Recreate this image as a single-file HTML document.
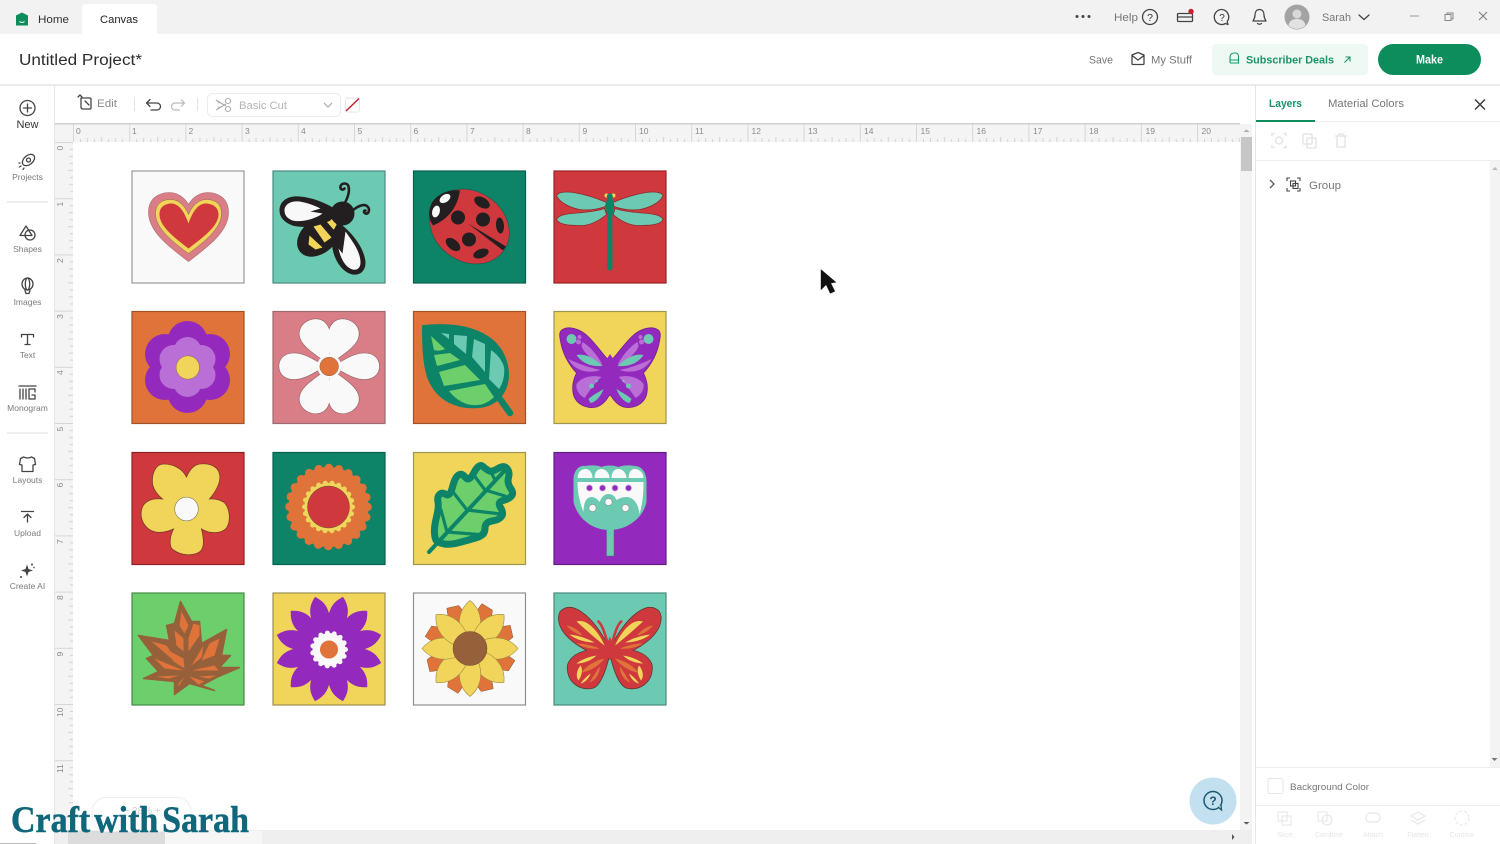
<!DOCTYPE html>
<html><head><meta charset="utf-8"><title>Canvas</title>
<style>
html,body{margin:0;padding:0;background:#fff;width:1500px;height:844px;overflow:hidden}
svg{display:block}
text{font-family:"Liberation Sans",sans-serif}
.ic{fill:none;stroke:#444;stroke-width:1.3;stroke-linecap:round;stroke-linejoin:round}
.lb{font-size:8.5px;fill:#7a7a7a;text-anchor:middle}
.rn{font-size:8.5px;fill:#8a8a8a}
.fa{fill:none;stroke:#e8e8e8;stroke-width:1.2}
.fl{font-size:7px;fill:#e6e6e6;text-anchor:middle}
</style></head><body>
<svg width="1500" height="844" viewBox="0 0 1500 844" xmlns="http://www.w3.org/2000/svg">
<defs>
<pattern id="hr" x="73" y="124" width="56.2" height="18" patternUnits="userSpaceOnUse">
<path d="M0.5 0V18" stroke="#d6d6d6" stroke-width="1"/>
<path d="M7.5 15V18M14.5 14V18M21.500 15V18M28.5 13V18M35.500 15V18M42.500 14V18M49.500 15V18" stroke="#d2d2d2" stroke-width="1"/>
</pattern>
<pattern id="vr" x="55" y="142" width="18" height="56.2" patternUnits="userSpaceOnUse">
<path d="M0 0.5H18" stroke="#d6d6d6" stroke-width="1"/>
<path d="M15 7.5H18M14 14.5H18M15 21.500H18M13 28.5H18M15 35.500H18M14 42.500H18M15 49.500H18" stroke="#d2d2d2" stroke-width="1"/>
</pattern>
<path id="dais" d="M0,-3 C-6,-14 -15,-26 -15,-36 C-15,-45 -8,-50 0,-50 C8,-50 15,-45 15,-36 C15,-26 6,-14 0,-3Z"/>
<path id="daiss" d="M0,-3 C-5,-14 -13,-24 -13,-35 C-13,-45 -7,-50 0,-50 C7,-50 13,-45 13,-35 C13,-24 5,-14 0,-3Z"/>
<path id="star" d="M0,-54 C8,-47 10,-40 9,-30 L-9,-30 C-10,-40 -8,-47 0,-54Z"/>
<path id="sun" d="M0,-48 C10,-40 13,-28 9,-15 L-9,-15 C-13,-28 -10,-40 0,-48Z"/>
<path id="sunb" d="M-6,-46 L6,-44 C10,-32 8,-24 6,-15 L-6,-15 C-10,-26 -9,-36 -6,-46Z"/>
<g id="bfy">
<path d="M56 50C50 45 44 34 33 24C26 18 16 15 10 18C5 20 6 25 7 30C9 42 14 52 23 62C20 68 18 76 20 84C23 94 34 98 43 96C50 94 54 88 57 82Z" fill="#9429bd" stroke="#6c2290" stroke-width=".8"/>
<circle cx="18" cy="28" r="5" fill="#6ccab2"/><circle cx="26" cy="26" r="2" fill="#b96fd6"/><circle cx="25" cy="31" r="2.500" fill="#b96fd6"/>
<path d="M29 31C36 35 44 44 49 54C40 50 30 42 28 35Z" fill="#b96fd6"/>
<path d="M23 44C32 42 42 48 49 55C39 56 29 53 23 44Z" fill="#6ccab2"/>
<path d="M15 48C25 53 37 57 47 59C35 63 21 60 15 48Z" fill="#b96fd6"/>
<path d="M23 73C29 65 40 64 48 66C41 72 36 80 31 87C26 84 22 79 23 73Z" fill="#b96fd6"/>
<circle cx="38" cy="75" r="2.500" fill="#6ccab2"/><circle cx="43" cy="70" r="1.200" fill="#6ccab2"/>
<path d="M35 88C39 84 44 82 50 78C48 84 43 91 37 92Z" fill="#6ccab2"/>
</g>
<g id="bfr">
<path d="M56 55C48 40 36 22 22 16C14 13 6 16 5 24C4 36 14 48 33 58C22 60 12 68 14 78C15 90 26 98 38 96C46 95 52 80 56 63Z" fill="#cf393d" stroke="#5d3a34" stroke-width=".8"/>
<g fill="#f1d45a"><path d="M23 29C30 27 36 31 42 38C46 43 49 48 51 53C43 47 32 37 23 29Z"/><path d="M16 42C25 43 34 46 41 50C32 50 22 47 16 42Z"/><path d="M23 71C28 67 36 64 43 63C38 68 30 71 23 71Z"/><path d="M27 73C30 77 28 84 25 88C22 84 23 78 27 73Z"/><path d="M27 91C30 87 33 84 37 81C36 85 32 90 27 91Z"/></g>
<g fill="#e0733a"><path d="M13 33C20 34 25 38 29 43C24 42 17 38 13 33Z"/><path d="M23 51C31 51 39 53 46 56C38 57 30 55 23 51Z"/><path d="M28 80C33 73 42 68 51 66C46 73 36 79 28 80Z"/><path d="M36 90C39 85 42 80 46 74C47 80 42 88 36 90Z"/></g>
</g>
<g id="dfw">
<path d="M3 25C5 21 12 21 20 22C32 24 44 28 53 32L52 36C44 39 34 40 26 39C16 37 6 32 3 25Z" fill="#6ccab2" stroke="#8a2b2f" stroke-width=".8"/>
<path d="M3 49C5 45 10 44 18 43C30 42 42 41 51 38L53 44C46 50 38 54 30 55C18 55 6 55 3 49Z" fill="#6ccab2" stroke="#8a2b2f" stroke-width=".8"/>
</g>
</defs>

<!-- top bar -->
<rect x="0" y="0" width="1500" height="34" fill="#f2f2f2"/>
<path d="M82 34V7a3 3 0 0 1 3-3h69a3 3 0 0 1 3 3v27Z" fill="#fff"/>
<path d="M16 15.5 22 12.5 28 15.5V25.5H16Z" fill="#0d8d5b"/><path d="M19.5 21.5Q22 23.5 24.5 21.5" stroke="#fff" stroke-width="1" fill="none"/>
<text x="38" y="23" font-size="11" fill="#333" textLength="31" lengthAdjust="spacingAndGlyphs">Home</text>
<text x="100" y="23" font-size="11" fill="#222" textLength="38" lengthAdjust="spacingAndGlyphs">Canvas</text>
<g fill="#444"><circle cx="1077" cy="16.5" r="1.5"/><circle cx="1083" cy="16.5" r="1.5"/><circle cx="1089" cy="16.5" r="1.5"/></g>
<text x="1114" y="21" font-size="11" fill="#777" textLength="24" lengthAdjust="spacingAndGlyphs">Help</text>
<circle cx="1150" cy="17" r="7.5" class="ic"/><text x="1150" y="21" font-size="10.5" fill="#333" text-anchor="middle">?</text>
<path d="M1178.500 13.500h13a1 1 0 0 1 1 1v6a1 1 0 0 1-1 1h-13a1 1 0 0 1-1-1v-6a1 1 0 0 1 1-1ZM1177.500 17h15" class="ic"/><circle cx="1191" cy="11.500" r="2.700" fill="#c8202a"/>
<path d="M1222 9.500a7.500 7.500 0 1 0 3.500 14l2.500 1-.8-3a7.500 7.500 0 0 0-5.200-12Z" class="ic"/><text x="1222" y="21" font-size="10" fill="#333" text-anchor="middle">?</text>
<path d="M1259.500 9.500c-3 0-4.500 2.500-4.500 5.500 0 3-1.500 5-2 6h13c-.5-1-2-3-2-6 0-3-1.500-5.500-4.500-5.500ZM1257.500 23.500q2 1.500 4 0" class="ic"/>
<circle cx="1297" cy="17" r="12.500" fill="#a3a3a3"/><circle cx="1297" cy="14" r="4.500" fill="#d8d8d8"/><path d="M1288.500 25.500c1-5 4-6.500 8.500-6.500s7.500 1.500 8.500 6.500a12.500 12.500 0 0 1-17 0Z" fill="#e2e2e2"/>
<text x="1322" y="21" font-size="11" fill="#777" textLength="29" lengthAdjust="spacingAndGlyphs">Sarah</text>
<path d="M1359 15l5 4.500 5-4.500" class="ic"/>
<path d="M1410 16h9" stroke="#999" stroke-width="1"/>
<path d="M1445 14.500h6v6h-6ZM1447 14.500v-1.500h6v6h-2" fill="none" stroke="#888" stroke-width="1"/>
<path d="M1479 12l8 8M1487 12l-8 8" stroke="#777" stroke-width="1"/>

<!-- project bar -->
<text x="19" y="65" font-size="15.500" fill="#2c2c2c" textLength="123" lengthAdjust="spacingAndGlyphs">Untitled Project*</text>
<text x="1089" y="63.500" font-size="11" fill="#777" textLength="24" lengthAdjust="spacingAndGlyphs">Save</text>
<path d="M1132 55l6-2.500 6 2.500v8.500a1 1 0 0 1-1 1h-10a1 1 0 0 1-1-1ZM1132 55.500l6 4.500 6-4.500" class="ic"/>
<text x="1151" y="63.500" font-size="11" fill="#777" textLength="41" lengthAdjust="spacingAndGlyphs">My Stuff</text>
<rect x="1212" y="44" width="156" height="31" rx="4" fill="#eef9f4"/>
<path d="M1230 62v-5a4 4 0 0 1 4-4h1.500a3 3 0 0 1 3 3v7h-7q-1.500 0-1.500-1ZM1230 60h8" fill="none" stroke="#169a6b" stroke-width="1.100"/>
<text x="1246" y="63.500" font-size="11" font-weight="700" fill="#1a9468" textLength="88" lengthAdjust="spacingAndGlyphs">Subscriber Deals</text>
<path d="M1344.500 62.500l5-5M1345.500 57h4.500v4.500" fill="none" stroke="#1a9468" stroke-width="1.100"/>
<rect x="1378" y="44" width="103" height="31" rx="15.500" fill="#0d8d5b"/>
<text x="1416" y="63.500" font-size="11.500" font-weight="700" fill="#fff" textLength="27" lengthAdjust="spacingAndGlyphs">Make</text>
<rect x="0" y="84" width="1500" height="2" fill="#ebebeb"/>

<!-- left sidebar -->
<rect x="54" y="86" width="1" height="758" fill="#e6e6e6"/>
<circle cx="27.500" cy="108" r="7.500" class="ic"/><path d="M27.500 104v8M23.500 108h8" class="ic"/>
<text x="27.500" y="128" font-size="11" fill="#333" text-anchor="middle">New</text>
<g class="ic"><ellipse cx="28.500" cy="160" rx="7" ry="4.500" transform="rotate(-40 28.500 160)"/><circle cx="28.500" cy="160" r="2"/><path d="M21 166l-1.500 1M24 168l-1 1.500M20 163l-1 0"/></g>
<text x="27.500" y="180" class="lb">Projects</text>
<rect x="7" y="201.500" width="41" height="1" fill="#ddd"/>
<g class="ic"><path d="M26 226l6 9.500H20Z"/><circle cx="30" cy="235" r="5"/></g>
<text x="27.500" y="252" class="lb">Shapes</text>
<g class="ic"><ellipse cx="27.500" cy="284" rx="5.500" ry="6"/><ellipse cx="27.500" cy="284" rx="2.200" ry="6"/><path d="M25 290.500l1 3h3l1-3"/></g>
<text x="27.500" y="305" class="lb">Images</text>
<path d="M21.500 337v-2.500h12v2.500M27.500 334.500v10M25 344.500h5" class="ic"/>
<text x="27.500" y="358" class="lb">Text</text>
<g class="ic" stroke-width="1"><path d="M19 386h17M20 389v10M23 389v10M26 389v10M29 389h6v3M29 389v10h6v-4h-3"/></g>
<text x="27.500" y="411" class="lb">Monogram</text>
<rect x="7" y="432.500" width="41" height="1" fill="#ddd"/>
<path d="M23.500 457l-3 1.500-1 6 2.500.5v6.500h11V465l2.500-.5-1-6-3-1.500q-4 2-8 0Z" class="ic"/>
<text x="27.500" y="483" class="lb">Layouts</text>
<path d="M21.500 511.500h12M27.500 522v-8M24 517.500l3.500-3.500 3.500 3.500" class="ic"/>
<text x="27.500" y="536" class="lb">Upload</text>
<path d="M27 564.500l1.500 4.500 4.500 1.500-4.500 1.500-1.500 4.500-1.500-4.500-4.500-1.500 4.500-1.500Z" fill="#444"/><circle cx="32" cy="564.500" r="1" fill="#444"/><circle cx="34" cy="567.500" r=".8" fill="#444"/><circle cx="21" cy="577" r="1" fill="#444"/>
<text x="27.500" y="589" class="lb">Create AI</text>

<!-- toolbar -->
<path d="M78 97l2-2 2 2M81 98h9a1 1 0 0 1 1 1v9a1 1 0 0 1-1 1h-7q-2 0-2-2v-7ZM85 101l4 4" class="ic"/>
<text x="97" y="107" font-size="11" fill="#888" textLength="20" lengthAdjust="spacingAndGlyphs">Edit</text>
<rect x="134" y="98" width="1" height="13" fill="#e2e2e2"/>
<path d="M147 103h10a3.500 3.500 0 0 1 0 7h-6M150 99.500l-3.500 3.500 3.500 3.500" class="ic"/>
<path d="M184 103h-9a3.500 3.500 0 0 0 0 7h5M181 99.500l3.500 3.500-3.500 3.500" fill="none" stroke="#bbb" stroke-width="1.200"/>
<rect x="197" y="98" width="1" height="13" fill="#e2e2e2"/>
<rect x="207.500" y="93.500" width="133" height="23" rx="5" fill="#fff" stroke="#ececec"/>
<g fill="none" stroke="#aaa" stroke-width="1.100"><circle cx="228" cy="101" r="2.500"/><circle cx="228" cy="109" r="2.500"/><path d="M216 100l10 6M216 110l10-6M220 102.500l-2 .5M220 107.500l-2-.5"/></g>
<text x="239" y="109" font-size="11" fill="#b5b5b5" textLength="48" lengthAdjust="spacingAndGlyphs">Basic Cut</text>
<path d="M324 103l4 4 4-4" fill="none" stroke="#aaa" stroke-width="1.200"/>
<rect x="345.500" y="98" width="14" height="14" rx="2" fill="#fff" stroke="#e6e6e6"/>
<path d="M346 111L359 98.500" stroke="#c7202a" stroke-width="1.500"/>

<!-- rulers -->
<rect x="55" y="123" width="1185" height="19" fill="#f4f4f4"/>
<rect x="55" y="123" width="1185" height="1.500" fill="#cfcfcf"/>
<rect x="73" y="124.500" width="1167" height="17.500" fill="url(#hr)"/>
<rect x="55" y="142" width="18" height="688" fill="#f4f4f4"/>
<rect x="55" y="142" width="18" height="688" fill="url(#vr)"/>
<g class="rn">
<text x="76" y="134">0</text><text x="132" y="134">1</text><text x="188.500" y="134">2</text><text x="245" y="134">3</text><text x="301" y="134">4</text><text x="357.500" y="134">5</text><text x="413.500" y="134">6</text><text x="470" y="134">7</text><text x="526" y="134">8</text><text x="582.500" y="134">9</text><text x="639" y="134">10</text><text x="695" y="134">11</text><text x="751.500" y="134">12</text><text x="808" y="134">13</text><text x="864" y="134">14</text><text x="920.500" y="134">15</text><text x="976.500" y="134">16</text><text x="1033" y="134">17</text><text x="1089" y="134">18</text><text x="1145.500" y="134">19</text><text x="1201.500" y="134">20</text>
<text transform="translate(63 150.500) rotate(-90)">0</text><text transform="translate(63 206.500) rotate(-90)">1</text><text transform="translate(63 263) rotate(-90)">2</text><text transform="translate(63 319) rotate(-90)">3</text><text transform="translate(63 375) rotate(-90)">4</text><text transform="translate(63 431.500) rotate(-90)">5</text><text transform="translate(63 487.500) rotate(-90)">6</text><text transform="translate(63 544) rotate(-90)">7</text><text transform="translate(63 600) rotate(-90)">8</text><text transform="translate(63 656.500) rotate(-90)">9</text><text transform="translate(63 717) rotate(-90)">10</text><text transform="translate(63 773) rotate(-90)">11</text>
</g>

<!-- scrollbars -->
<rect x="1240" y="124" width="12" height="706" fill="#f3f3f3"/>
<rect x="1241" y="137" width="11" height="34" fill="#c6c6c6"/>
<path d="M1243.500 132l3-2.500 3 2.500Z" fill="#aaa"/><path d="M1243.500 822l3 2.500 3-2.500Z" fill="#555"/>
<rect x="55" y="830" width="1197" height="14" fill="#efefef"/>
<rect x="68" y="831" width="97" height="13" fill="#dcdcdc"/>
<rect x="165" y="831" width="97" height="13" fill="#f6f6f6"/>
<path d="M1232 834l2.500 3-2.500 3Z" fill="#555"/>
<rect x="0" y="843" width="36" height="1" fill="#bbb"/>

<!-- tiles -->
<g transform="translate(131.500 170.500)">
<rect x=".5" y=".5" width="112" height="112" fill="#f9f9f9" stroke="#9a9a9a" stroke-width="1.200"/>
<path d="M57 91C40 78 17 62 17 42C17 28 27 22 38 22C46 22 53 27 57 34C61 27 68 22 76 22C87 22 97 28 97 42C97 62 74 78 57 91Z" fill="#d97e86" stroke="#a96b70" stroke-width=".6"/>
<path d="M57 83C42 72 24 58 24 43C24 33 31 29 39 29C47 29 53 35 57 44C61 35 67 29 75 29C83 29 90 33 90 43C90 58 72 72 57 83Z" fill="#f1d45a" stroke="#8a6b40" stroke-width=".5"/>
<path d="M57 78C44 68 28 56 28 44C28 36 34 33 40 33C47 33 53 41 57 53C61 41 67 33 74 33C80 33 87 36 87 44C87 56 70 68 57 78Z" fill="#cf393d"/>
</g>
<g transform="translate(272.500 170.500)">
<rect x=".5" y=".5" width="112" height="112" fill="#6ccab2" stroke="#4c8a7c" stroke-width="1.200"/>
<ellipse cx="46" cy="66" rx="24" ry="17" transform="rotate(-40 46 66)" fill="#231f20"/>
<path d="M54 51L61 48L65 56L61 59Z" fill="#f1d45a"/>
<path d="M41 56L48 54L59 67L52 72Z" fill="#f1d45a"/>
<path d="M37 65L50 77L43 79L36 74Z" fill="#f1d45a"/>
<path d="M7 40C7 30 16 25 27 26C40 27 52 32 62 38L58 50C45 56 30 58 20 55C12 52 7 47 7 40Z" fill="#231f20"/>
<path d="M12 40C12 34 18 30 27 31C34 32 42 35 48 38L38 41L50 43C42 49 28 52 20 50C15 48 12 45 12 40Z" fill="#f8f8f8"/>
<circle cx="70" cy="43" r="12" fill="#231f20"/>
<path d="M72 33C76 26 77 20 76 16C75 12 69 12 68 16C67 19 71 20 72 18M80 40C86 35 92 33 95 36C98 39 96 44 93 43C91 42 91 40 93 40" fill="none" stroke="#231f20" stroke-width="2.600" stroke-linecap="round"/>
<path d="M66 52C80 62 92 78 93 92C93 101 87 105 80 104C70 102 62 90 60 78C59 68 60 58 66 52Z" fill="#231f20"/>
<path d="M73 61C81 72 88 82 88 92C88 98 84 100 80 99C73 97 68 88 66 78L70 83Z" fill="#f8f8f8"/>
</g>
<g transform="translate(413 170.500)">
<rect x=".5" y=".5" width="112" height="112" fill="#0d8468" stroke="#0a5f4c" stroke-width="1.200"/>
<ellipse cx="56.500" cy="56" rx="42" ry="35" transform="rotate(35 56.500 56)" fill="#cf393d" stroke="#0a5f4c" stroke-width=".6"/>
<path d="M47 20C36 18 24 24 19 32C15 40 15 48 20 55C32 50 44 40 47 20Z" fill="#231f20"/>
<ellipse cx="32" cy="28" rx="6" ry="3.800" transform="rotate(-35 32 28)" fill="#f8f8f8"/>
<ellipse cx="23" cy="41" rx="3.800" ry="6" transform="rotate(15 23 41)" fill="#f8f8f8"/>
<g fill="#231f20"><ellipse cx="69" cy="32" rx="8.500" ry="5" transform="rotate(30 69 32)"/><circle cx="45" cy="47" r="7"/><circle cx="70" cy="49" r="7"/><ellipse cx="87" cy="55" rx="4" ry="8" transform="rotate(-5 87 55)"/><circle cx="56" cy="69" r="7"/><ellipse cx="40" cy="74" rx="8.500" ry="5" transform="rotate(40 40 74)"/><ellipse cx="68" cy="83" rx="8" ry="4.500" transform="rotate(-20 68 83)"/><path d="M55 53L93 76L90 80Z"/></g>
</g>
<g transform="translate(553.500 170.500)">
<rect x=".5" y=".5" width="112" height="112" fill="#cf393d" stroke="#9c2226" stroke-width="1.200"/>
<use href="#dfw"/><use href="#dfw" transform="translate(112.600 0) scale(-1 1)"/>
<ellipse cx="56.300" cy="36" rx="3.800" ry="11" fill="#0d8468"/>
<path d="M53.800 42h5l.2 55q-.5 3-2.700 3t-2.700-3Z" fill="#0d8468"/>
<circle cx="53" cy="25" r="2" fill="#f1d45a"/><circle cx="60" cy="25" r="2" fill="#f1d45a"/><circle cx="56.300" cy="26" r="3" fill="#0d8468"/>
</g>

<g transform="translate(131.500 311)">
<rect x=".5" y=".5" width="112" height="112" fill="#e0733a" stroke="#a05226" stroke-width="1.200"/>
<g fill="#9429bd"><circle cx="56" cy="30" r="20"/><circle cx="56" cy="82" r="20"/><circle cx="33.500" cy="43" r="20"/><circle cx="78.500" cy="43" r="20"/><circle cx="33.500" cy="69" r="20"/><circle cx="78.500" cy="69" r="20"/><circle cx="56" cy="56" r="26"/></g>
<g fill="#b96fd6"><circle cx="56" cy="40" r="14"/><circle cx="56" cy="72" r="14"/><circle cx="42" cy="48" r="14"/><circle cx="70" cy="48" r="14"/><circle cx="42" cy="64" r="14"/><circle cx="70" cy="64" r="14"/></g>
<circle cx="56.300" cy="56.500" r="11.700" fill="#f1d45a" stroke="#8a6b40" stroke-width=".5"/>
</g>
<g transform="translate(272.500 311)">
<rect x=".5" y=".5" width="112" height="112" fill="#d97e86" stroke="#9c6a6e" stroke-width="1.200"/>
<g fill="#f9f9f9" stroke="#8f5f62" stroke-width="1.200" transform="translate(56.700 55.300)"><use href="#dais" transform="rotate(-24)"/><use href="#dais" transform="rotate(24)"/><use href="#daiss" transform="rotate(90)"/><use href="#daiss" transform="rotate(-90)"/><use href="#dais" transform="rotate(156)"/><use href="#dais" transform="rotate(-156)"/></g>
<g fill="#f9f9f9" transform="translate(56.700 55.300)"><use href="#dais" transform="rotate(-24)"/><use href="#dais" transform="rotate(24)"/><use href="#daiss" transform="rotate(90)"/><use href="#daiss" transform="rotate(-90)"/><use href="#dais" transform="rotate(156)"/><use href="#dais" transform="rotate(-156)"/><circle r="12"/></g>
<circle cx="56.700" cy="55.500" r="9.300" fill="#e0733a" stroke="#8f5f42" stroke-width=".5"/>
</g>
<g transform="translate(413 311)">
<rect x=".5" y=".5" width="112" height="112" fill="#e0733a" stroke="#a05226" stroke-width="1.200"/>
<path d="M10 15C30 13 60 13 80 30C93 42 99 62 92 78C88 88 78 95 66 96C45 98 24 90 15 66C10 50 10 30 10 15Z" fill="#0d8468" stroke="#0d8468" stroke-width="2" stroke-linejoin="round"/>
<path d="M84 84L97 102" stroke="#0d8468" stroke-width="6.500" stroke-linecap="round"/>
<g fill="#6ccf6b"><path d="M18 25L32 38C28 40 24 40 21 39Z"/><path d="M21 44L37 42L47 49L24 55Z"/><path d="M26 61L52 54L67 69L31 75Z"/><path d="M36 80L72 73L81 86C76 91 70 94 64 94C54 95 44 90 36 80Z"/></g>
<g fill="#6ccab2"><path d="M28 22L36 23V28Z"/><path d="M41 24L54 25L53 43L41 33Z"/><path d="M61 28L72 33V61L59 46Z"/><path d="M78 39C84 43 89 49 91 56C92 64 90 72 86 78L76 68Z"/></g>
</g>
<g transform="translate(553.500 311)">
<rect x=".5" y=".5" width="112" height="112" fill="#f1d45a" stroke="#9c9650" stroke-width="1.200"/>
<use href="#bfy"/><use href="#bfy" transform="translate(113 0) scale(-1 1)"/>
<path d="M52 50L56.500 43L61 50L66 60L60 75L56.500 86L53 75L47 60Z" fill="#9429bd"/>
</g>

<g transform="translate(131.500 452)">
<rect x=".5" y=".5" width="112" height="112" fill="#cf393d" stroke="#8e2226" stroke-width="1.200"/>
<path d="M55 25C50 15 40 12 32 12C24 12 20 22 21 32C22 38 27 44 31 47C22 46 12 48 10 58C8 68 14 78 24 80C28 81 36 80 42 77C38 85 37 95 42 98C50 104 62 104 68 100C74 96 72 85 70 77C78 82 90 82 95 76C100 68 98 55 92 50C85 46 78 47 78 47C84 40 90 30 88 22C86 13 76 11 68 12C62 13 58 18 55 25Z" fill="#f1d45a" stroke="#7a3a2a" stroke-width=".8"/>
<circle cx="55" cy="57" r="11.800" fill="#f9f9f9" stroke="#8a8a60" stroke-width=".7"/>
</g>
<g transform="translate(272.500 452)">
<rect x=".5" y=".5" width="112" height="112" fill="#0d8468" stroke="#0a5f4c" stroke-width="1.200"/>
<circle cx="56" cy="55" r="40" fill="#e0733a"/>
<circle cx="56" cy="55" r="39" fill="none" stroke="#e0733a" stroke-width="8.500" stroke-linecap="round" stroke-dasharray="0 10.210"/>
<circle cx="56" cy="55" r="24.500" fill="#f1d45a" stroke="#5a5a30" stroke-width=".3"/>
<circle cx="56" cy="55" r="24" fill="none" stroke="#f1d45a" stroke-width="5" stroke-linecap="round" stroke-dasharray="0 6.854"/>
<circle cx="56" cy="55" r="21" fill="#cf393d" stroke="#5a5a30" stroke-width=".5"/>
</g>
<g transform="translate(413 452)">
<rect x=".5" y=".5" width="112" height="112" fill="#f1d45a" stroke="#9c9650" stroke-width="1.200"/>
<path d="M24 89.500Q22 88 21.500 81.500Q21 75 23.500 65Q26 55 25 50Q24 45 26.500 42.500Q29 40 33 42.500Q37 45 39.500 35Q42 25 45.500 23Q49 21 52.500 25.500Q56 30 61 20.500Q66 11 70 14.500Q74 18 76.500 19Q79 20 85 16.500Q91 13 94 16.500Q97 20 95.500 25.500Q94 31 97.500 36Q101 41 98.500 44Q96 47 90 48.500Q84 50 87.500 55.500Q91 61 88.500 64.500Q86 68 79 69Q72 70 72 76.500Q72 83 64 85.500Q56 88 46.500 90.500Q37 93 31.500 92Q26 91 24 89.500Z" fill="#6ccf6b" stroke="#0d8468" stroke-width="7" stroke-linejoin="round"/>
<g fill="none" stroke="#0d8468" stroke-width="3.200" stroke-linecap="round"><path d="M16 100L94 16" stroke-width="4"/><path d="M34 80L28 58M34 80L72 83M54 58L40 40M54 58L88 62M72 38L60 22M72 38L92 44M82 28L78 20"/></g>
</g>
<g transform="translate(553.500 452)">
<rect x=".5" y=".5" width="112" height="112" fill="#9429bd" stroke="#5e1f7e" stroke-width="1.200"/>
<rect x="53" y="72" width="7.500" height="32" fill="#6ccab2" stroke="#4c6a7c" stroke-width=".5"/>
<path d="M20 28C20 18 26 13 32 14C36 13 44 13 48 15C52 13 60 13 65 15C70 13 76 13 81 14C88 14 93 20 93 30V50C90 65 75 78 56 78C38 78 24 66 20 50Z" fill="#6ccab2"/>
<g fill="#f9f9f9"><path d="M24 26C24 20 28 17 32 17C36 17 39 21 39 26Z"/><path d="M41 26C41 20 44 17 48 17C52 17 56 21 56 26Z"/><path d="M58 26C58 20 61 17 65 17C69 17 73 21 73 26Z"/><path d="M75 26C75 20 78 17 81 17C86 17 90 21 90 26Z"/>
<path d="M24 30H90C90 42 89 52 86 62C85 52 80 45 73 45C68 45 65 47 63 48C61 44 59 42 55 42C51 42 48 45 46 50C44 47 41 45 38 45C33 45 30 50 30 60C26 50 24 40 24 30Z"/></g>
<g fill="#9429bd" stroke="#c9a5d6" stroke-width=".8"><circle cx="36" cy="36" r="3"/><circle cx="49" cy="36" r="3"/><circle cx="61.500" cy="36" r="3"/><circle cx="75" cy="36" r="3"/></g>
<g fill="#f9f9f9" stroke="#8a8a8a" stroke-width=".6"><circle cx="39" cy="56" r="3.600"/><circle cx="55" cy="50" r="3.600"/><circle cx="72" cy="56" r="3.600"/></g>
</g>

<g transform="translate(131.500 592.500)">
<rect x=".5" y=".5" width="112" height="112" fill="#6ccf6b" stroke="#428a46" stroke-width="1.200"/>
<path d="M49 9L60 29L68 29L70 51L95 37L90 63L99 63L88 75L108 75L87 84L70 93L83 98L58 91L43 102L43 89L12 86L27 79L15 66L22 63L7 43L38 48L35 33L43 31Z" fill="#96613a" stroke="#96613a" stroke-width="1.500" stroke-linejoin="round"/>
<g fill="#e0733a"><path d="M50 19L57 33L53 41L48 33Z"/><path d="M43 38L52 46L52 59L45 53Z"/><path d="M62 31L68 33L68 43L57 59L57 46Z"/><path d="M88 46L83 63L70 68L78 51Z"/><path d="M60 73L72 53L70 65Z"/><path d="M37 58L52 66L53 76L42 69Z"/><path d="M20 49L35 53L48 73Z"/><path d="M23 66L52 78L33 76Z"/><path d="M60 78L83 73L87 78Z"/><path d="M25 84L48 83L37 86Z"/><path d="M47 91L53 84L47 94Z"/><path d="M58 84L73 89L67 92Z"/><path d="M67 84L85 83L77 86Z"/></g>
</g>
<g transform="translate(272.500 592.500)">
<rect x=".5" y=".5" width="112" height="112" fill="#f1d45a" stroke="#9c8f50" stroke-width="1.200"/>
<g fill="#9429bd" transform="translate(56.500 56.500)"><use href="#star" transform="rotate(15)"/><use href="#star" transform="rotate(45)"/><use href="#star" transform="rotate(75)"/><use href="#star" transform="rotate(105)"/><use href="#star" transform="rotate(135)"/><use href="#star" transform="rotate(165)"/><use href="#star" transform="rotate(195)"/><use href="#star" transform="rotate(225)"/><use href="#star" transform="rotate(255)"/><use href="#star" transform="rotate(285)"/><use href="#star" transform="rotate(315)"/><use href="#star" transform="rotate(345)"/><circle r="33"/></g>
<circle cx="56.500" cy="57" r="16.500" fill="#f9f9f9"/>
<circle cx="56.500" cy="57" r="16.500" fill="none" stroke="#f9f9f9" stroke-width="5" stroke-linecap="round" stroke-dasharray="0 6.910"/>
<circle cx="56.500" cy="57" r="9" fill="#e0733a"/>
</g>
<g transform="translate(413 592.500)">
<rect x=".5" y=".5" width="112" height="112" fill="#f9f9f9" stroke="#8f8f8f" stroke-width="1.200"/>
<g fill="#e0733a" stroke="#8a5a2a" stroke-width=".5" transform="translate(57 56)"><use href="#sunb" transform="rotate(22.500)"/><use href="#sunb" transform="rotate(-22.500)"/><use href="#sunb" transform="rotate(67.500)"/><use href="#sunb" transform="rotate(-67.500)"/><use href="#sunb" transform="rotate(112.500)"/><use href="#sunb" transform="rotate(-112.500)"/><use href="#sunb" transform="rotate(157.500)"/><use href="#sunb" transform="rotate(-157.500)"/></g>
<g fill="#f1d45a" stroke="#9a8a40" stroke-width=".6" transform="translate(57 56)"><use href="#sun"/><use href="#sun" transform="rotate(45)"/><use href="#sun" transform="rotate(90)"/><use href="#sun" transform="rotate(135)"/><use href="#sun" transform="rotate(180)"/><use href="#sun" transform="rotate(225)"/><use href="#sun" transform="rotate(270)"/><use href="#sun" transform="rotate(315)"/></g>
<circle cx="57" cy="56" r="17" fill="#96613a" stroke="#6c4a2c" stroke-width=".5"/>
</g>
<g transform="translate(553.500 592.500)">
<rect x=".5" y=".5" width="112" height="112" fill="#6ccab2" stroke="#4c8a7c" stroke-width="1.200"/>
<use href="#bfr"/><use href="#bfr" transform="translate(112.600 0) scale(-1 1)"/>
<path d="M54 50L56.300 44L58.600 50L60 60L56.300 68L52.600 60Z" fill="#cf393d"/>
<path d="M54 50C51 40 49 33 45 29M58.600 50C61.600 40 63.600 33 67.600 29" fill="none" stroke="#cf393d" stroke-width="2.600" stroke-linecap="round"/>
</g>

<!-- cursor -->
<path d="M820.500 268.500V291L826 285.500L830 294L835.500 291.500L831.500 283.500L837 282.500Z" fill="#111" stroke="#fff" stroke-width=".6"/>

<!-- zoom pill -->
<rect x="92" y="797.500" width="99" height="34" rx="14" fill="#fff" stroke="#efefef"/>
<text x="142" y="814" font-size="10" fill="#cfcfcf" text-anchor="middle">−  28%  +</text>

<!-- watermark -->
<text x="11" y="832" font-size="37" font-weight="700" fill="#10677b" stroke="#10677b" stroke-width=".5" textLength="238" lengthAdjust="spacingAndGlyphs" style="font-family:'Liberation Serif',serif;word-spacing:-5px">Craft with Sarah</text>

<!-- help bubble -->
<circle cx="1213" cy="801" r="23.500" fill="#c3e0f0"/>
<circle cx="1213" cy="800.500" r="9" fill="none" stroke="#1f5670" stroke-width="1.500"/><path d="M1218 807l3.500 3-.5-5" fill="#c3e0f0" stroke="#1f5670" stroke-width="1.300"/>
<text x="1213" y="805" font-size="12" font-weight="700" fill="#1f5670" text-anchor="middle">?</text>

<!-- right panel -->
<rect x="1255" y="86" width="1" height="758" fill="#e6e6e6"/>
<text x="1269" y="107" font-size="11" font-weight="700" fill="#1a9468" textLength="33" lengthAdjust="spacingAndGlyphs">Layers</text>
<text x="1328" y="107" font-size="11" fill="#777" textLength="76" lengthAdjust="spacingAndGlyphs">Material Colors</text>
<path d="M1475 99.500l10 10M1485 99.500l-10 10" stroke="#333" stroke-width="1.300" fill="none"/>
<rect x="1256" y="120" width="59" height="2" fill="#0d8d5b"/>
<rect x="1315" y="121" width="185" height="1" fill="#eee"/>
<g fill="none" stroke="#e2e2e2" stroke-width="1.300"><path d="M1272 136v-2.500h3M1283 133.500h3v2.500M1286 145v2.500h-3M1275 147.500h-3v-2.500"/><circle cx="1279" cy="140.500" r="3.500"/><rect x="1303" y="134" width="9" height="10" rx="1"/><rect x="1307" y="138" width="9" height="10" rx="1"/><path d="M1335 136h12M1337 136v11h8v-11M1339 136v-2h4v2"/></g>
<rect x="1256" y="160" width="244" height="1" fill="#eee"/>
<path d="M1270 180l4 4-4 4" fill="none" stroke="#555" stroke-width="1.300"/>
<g fill="none" stroke="#444" stroke-width="1.100"><path d="M1287 181v-3h3M1297 178h3v3M1300 188v3h-3M1290 191h-3v-3"/><rect x="1290.500" y="181" width="5" height="5"/><rect x="1293" y="183.500" width="5" height="5"/></g>
<text x="1309" y="189" font-size="11" fill="#777" textLength="32" lengthAdjust="spacingAndGlyphs">Group</text>
<rect x="1490" y="161" width="10" height="606" fill="#f3f3f3"/>
<path d="M1492 170l3-3 3 3Z" fill="#bbb"/><path d="M1491.500 758l3 3 3-3Z" fill="#777"/>
<rect x="1256" y="767" width="244" height="1" fill="#eee"/>
<rect x="1268" y="778.500" width="15" height="15" rx="2" fill="#fff" stroke="#e4e4e4"/>
<text x="1290" y="790" font-size="9.500" fill="#777" textLength="79" lengthAdjust="spacingAndGlyphs">Background Color</text>
<rect x="1256" y="805" width="244" height="1" fill="#eee"/>
<g class="fa"><rect x="1278" y="812" width="9" height="9"/><rect x="1282" y="816" width="9" height="9"/><rect x="1318" y="812" width="9" height="9"/><circle cx="1327" cy="820" r="5"/><rect x="1366" y="813" width="14" height="9" rx="4"/><path d="M1411 816l7 4 7-4-7-4ZM1411 820l7 4 7-4"/><circle cx="1462" cy="818" r="7" stroke-dasharray="3 2"/></g>
<text x="1285" y="837" class="fl">Slice</text><text x="1329" y="837" class="fl">Combine</text><text x="1373" y="837" class="fl">Attach</text><text x="1418" y="837" class="fl">Flatten</text><text x="1462" y="837" class="fl">Contour</text>
</svg>
</body></html>
